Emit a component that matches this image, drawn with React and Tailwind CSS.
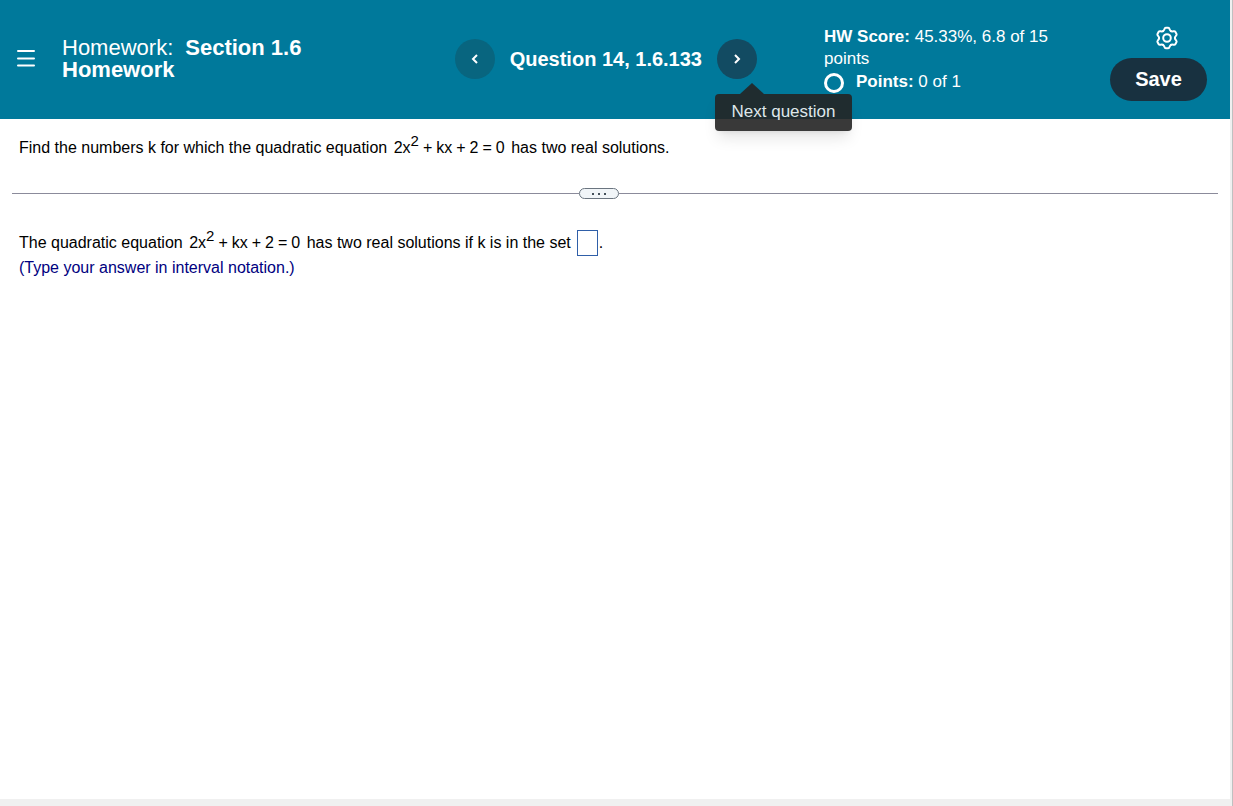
import React, { useState } from 'react';

const LOBES = [0, 60, 120, 180, 240, 300];

function GearIcon() {
  return (
    <svg width="24" height="24" viewBox="0 0 24 24" fill="none" stroke="currentColor" strokeWidth="2" strokeLinecap="round" aria-hidden="true">
      {LOBES.map((angle) => (
        <path key={angle} d="M8.050 5.160C9.800 4.300 9 1.700 10.800 1.700H13.200C15 1.700 14.200 4.300 15.950 5.160" transform={`rotate(${angle} 12 12)`} />
      ))}
      <circle cx="12" cy="12" r="3.8" />
    </svg>
  );
}

function Chevron({ direction }) {
  return (
    <svg width="10" height="12" viewBox="0 0 10 12" fill="none" stroke="currentColor" strokeWidth="2" aria-hidden="true">
      <path d={direction === 'left' ? 'M7 2L3 6L7 10' : 'M3 2L7 6L3 10'} />
    </svg>
  );
}

function Header() {
  return (
    <header className="flex h-[119px] items-start bg-[#00799b] pr-[23px] text-white">
      <button type="button" aria-label="Menu" className="ml-4 mt-12 flex h-5 w-5 items-center justify-center">
        <svg width="20" height="20" viewBox="0 0 20 20" stroke="currentColor" strokeWidth="2" strokeLinecap="round" aria-hidden="true">
          <path d="M2 3H18M2 10.500H18M2 17.500H18" />
        </svg>
      </button>

      <div className="ml-[26px] mt-[37px] min-w-0 flex-1">
        <h1 className="max-w-[280px] text-[22px] leading-[22px]">
          <span className="mr-3">Homework:</span>
          <strong>Section 1.6</strong> <strong>Homework</strong>
        </h1>
      </div>

      <nav className="mt-[39px] flex items-center" aria-label="Questions">
        <button type="button" aria-label="Previous question" className="flex h-10 w-10 items-center justify-center rounded-full bg-[#08657f]">
          <Chevron direction="left" />
        </button>
        <h2 className="mx-[15px] whitespace-nowrap text-xl leading-10 font-bold">Question 14, 1.6.133</h2>
        <div className="relative">
          <button type="button" aria-label="Next question" aria-describedby="next-tip" className="flex h-10 w-10 items-center justify-center rounded-full bg-[#124b62]">
            <Chevron direction="right" />
          </button>
          <div id="next-tip" role="tooltip" className="absolute -left-0.5 top-11 z-10 w-[137px]">
            <svg width="24" height="11" viewBox="0 0 24 11" className="ml-[25px]" aria-hidden="true">
              <path d="M0 11L12 0L24 11Z" fill="#242424" fillOpacity="0.9" />
            </svg>
            <div className="rounded bg-[#242424]/90 pb-px text-center text-[17px] leading-9 whitespace-nowrap text-[#dfe7ea] shadow-lg">
              Next question
            </div>
          </div>
        </div>
      </nav>

      <div className="ml-[67px] mt-[26px] w-[240px] text-[17px] leading-[22px]">
        <p>
          <strong>HW Score:</strong> 45.33%, 6.8 of 15 points
        </p>
        <p className="flex items-center gap-3 leading-6">
          <span className="mt-0.5 h-5 w-5 rounded-full border-3 border-white" />
          <span>
            <strong>Points:</strong> 0 of 1
          </span>
        </p>
      </div>

      <div className="ml-[46px] mt-[26px] flex w-[97px] flex-col items-center gap-2">
        <button type="button" aria-label="Settings" className="ml-4">
          <GearIcon />
        </button>
        <button type="button" className="h-[43px] w-full rounded-full bg-[#183140] pb-0.5 text-xl font-bold">
          Save
        </button>
      </div>
    </header>
  );
}

function Equation() {
  return (
    <span className="mx-0.5 whitespace-nowrap">
      2x<sup className="text-[15px]">2</sup>
      <span className="mx-1">+</span>
      <span>kx</span>
      <span className="mx-1">+</span>
      <span>2</span>
      <span className="mx-1">=</span>
      <span>0</span>
    </span>
  );
}

function Divider() {
  return (
    <div className="mt-7 flex items-center">
      <div className="h-px w-[47%] bg-[#8b8b9b]" />
      <button type="button" aria-label="Resize panels" className="flex h-[11px] w-10 items-center justify-center gap-1 rounded-full border border-[#6b7580] bg-[#f1f5f8]">
        <span className="h-0.5 w-0.5 bg-[#44505a]" />
        <span className="h-0.5 w-0.5 bg-[#44505a]" />
        <span className="h-0.5 w-0.5 bg-[#44505a]" />
      </button>
      <div className="h-px flex-1 bg-[#8b8b9b]" />
    </div>
  );
}

export default function App() {
  const [answer, setAnswer] = useState('');

  return (
    <div className="flex min-h-screen flex-col border-r border-[#c0c0c0] bg-[#f0f0f0] pb-[7px] font-['Liberation_Sans',Arial,sans-serif] text-black">
      <div className="mr-0.5 flex-1 bg-white">
        <Header />
        <main className="px-3 pt-[17px] text-base leading-6">
          <p className="px-[7px]">
            Find the numbers k for which the quadratic equation <Equation /> has two real solutions.
          </p>
          <Divider />
          <div className="px-[7px] pt-[31px]">
            <div className="flex items-center">
              <label htmlFor="answer">
                The quadratic equation <Equation /> has two real solutions if k is in the set
              </label>
              <input
                id="answer"
                type="text"
                value={answer}
                onChange={(e) => setAnswer(e.target.value)}
                className="ml-1.5 mr-px h-[26px] w-[21px] border border-[#2f5fa8] text-center outline-none"
              />
              <span>.</span>
            </div>
            <p className="text-[#000080]">(Type your answer in interval notation.)</p>
          </div>
        </main>
      </div>
    </div>
  );
}
